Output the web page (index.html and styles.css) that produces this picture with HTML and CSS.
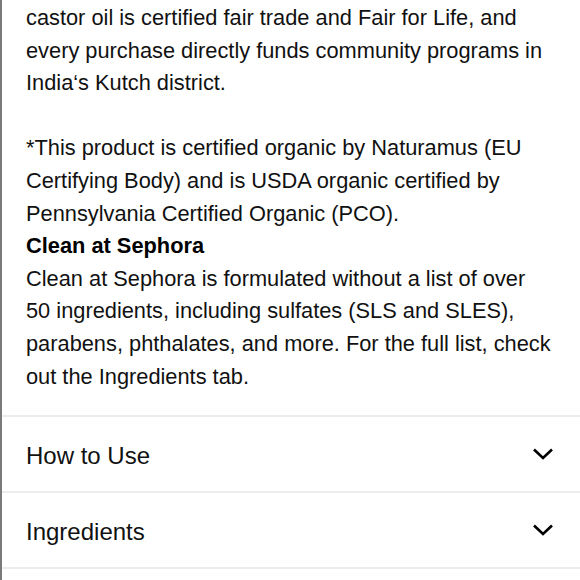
FILE: index.html
```html
<!DOCTYPE html>
<html>
<head>
<meta charset="utf-8">
<link rel="stylesheet" href="styles.css">
</head>
<body>
<div class="panel">
  <div class="desc">
    <p>castor oil is certified fair trade and Fair for Life, and every purchase directly funds community programs in India‘s Kutch district.</p>
    <p class="gap">*This product is certified organic by Naturamus (EU Certifying Body) and is USDA organic certified by Pennsylvania Certified Organic (PCO).<br><b>Clean at Sephora</b><br>Clean at Sephora is formulated without a list of over 50 ingredients, including sulfates (SLS and SLES), parabens, phthalates, and more. For the full list, check out the Ingredients tab.</p>
  </div>
  <div class="row">
    <span class="label">How to Use</span>
    <svg class="chev" width="22" height="14" viewBox="0 0 22 14"><path d="M2 2.5 L11 11 L20 2.5" fill="none" stroke="#000" stroke-width="2.6"/></svg>
  </div>
  <div class="row">
    <span class="label">Ingredients</span>
    <svg class="chev" width="22" height="14" viewBox="0 0 22 14"><path d="M2 2.5 L11 11 L20 2.5" fill="none" stroke="#000" stroke-width="2.6"/></svg>
  </div>
  <div class="row"></div>
</div>
</body>
</html>
```
FILE: styles.css
```css
html, body {
  margin: 0;
  padding: 0;
  background: #fff;
}
body {
  font-family: "Liberation Sans", Arial, sans-serif;
  color: #111;
  overflow: hidden;
}
.panel {
  border-left: 2px solid #7a7a7a;
  min-height: 580px;
}
.desc {
  padding: 2px 26px 22px 24px;
  font-size: 21.8px;
  line-height: 32.6px;
}
.desc p {
  margin: 0;
}
.desc p.gap {
  margin-top: 32.6px;
}
.desc b {
  font-weight: bold;
  color: #000;
}
.row {
  border-top: 2px solid #ececec;
  height: 74px;
  display: flex;
  align-items: center;
  justify-content: space-between;
  padding: 0 26px 0 24px;
}
.label {
  font-size: 24px;
  padding-top: 4px;
}
.chev {
  display: block;
}
```
